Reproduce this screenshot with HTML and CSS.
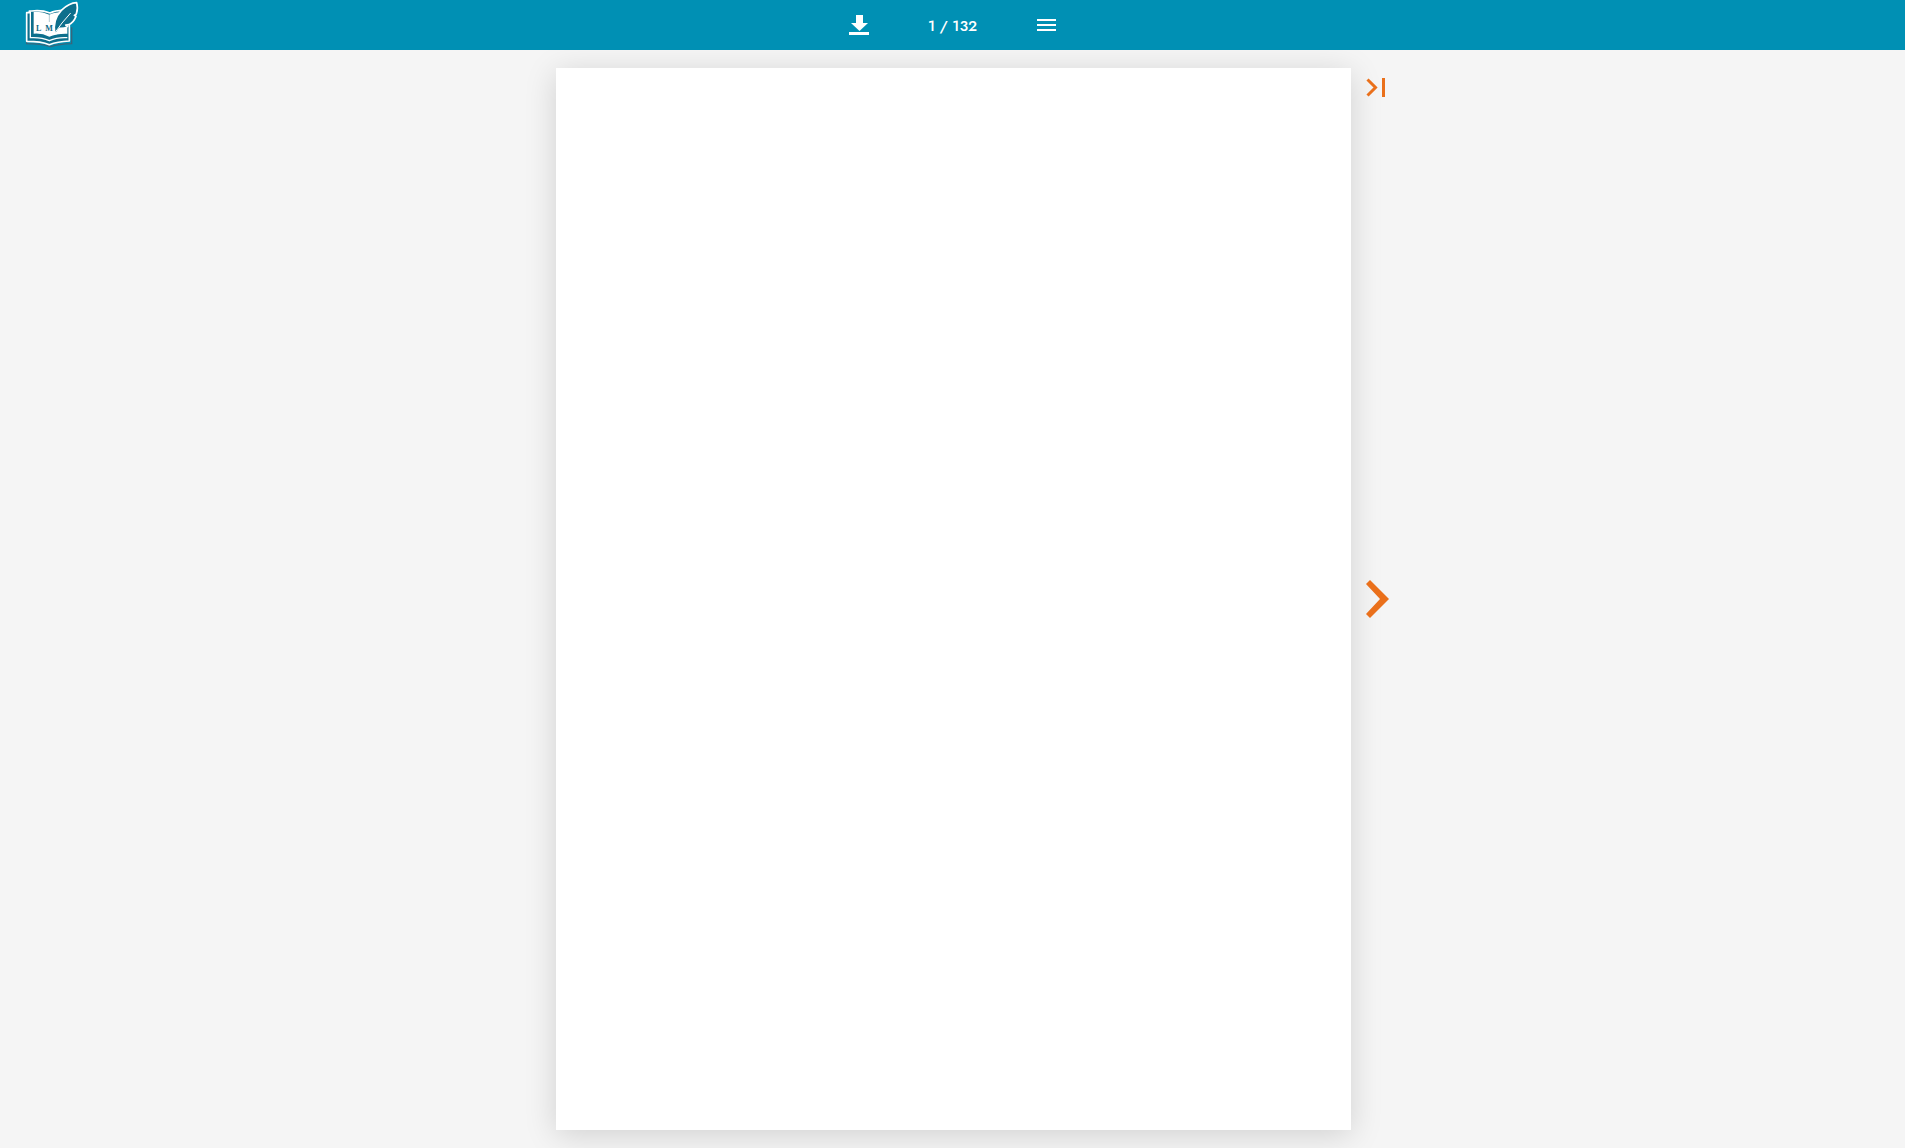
FILE: index.html
```html
<!DOCTYPE html>
<html lang="en">
<head>
<meta charset="utf-8">
<meta name="viewport" content="width=device-width, initial-scale=1">
<title>Document viewer</title>
<link rel="stylesheet" href="styles.css">
</head>
<body>
<header class="toolbar">
  <a class="brand" href="#" aria-label="Home">
    <svg class="brand-logo" viewBox="0 0 192 156" aria-hidden="true">
      <path d="M20 40 V131 Q65 131 92 140 Q116 132 155 131 V82" fill="none" stroke="#39657a" stroke-width="4"/>
      <path d="M20 38 H28 V33 H35 Q64 29 90 39 Q110 29 148 32 V123 Q112 125 88 134 Q64 124 20 124 Z" fill="#0d6f8c" stroke="#ffffff" stroke-width="5" stroke-linejoin="round"/>
      <path d="M31 34 V113 Q64 111 88 122 Q112 111 142 113" fill="none" stroke="#ffffff" stroke-width="4"/>
      <path d="M41 36 Q64 33 88 44 Q106 34 142 36 V101 Q110 100 88 110 Q67 99 41 101 Z" fill="#ffffff"/>
      <path d="M88 45 V66" fill="none" stroke="#8eafba" stroke-width="2"/>
      <text class="brand-text" x="48" y="93">L</text>
      <text class="brand-text" x="76" y="93">M</text>
      <path d="M104 99 Q98 58 124 31 Q147 9 170 8 Q175 25 169 42 L163 46 L168 49 Q160 69 146 74 L137 75 L143 79 Q133 86 119 85 L108 101 Z" fill="#0d6f8c" stroke="#ffffff" stroke-width="5" stroke-linejoin="round"/>
      <path d="M105 98 Q124 69 151 40" fill="none" stroke="#ffffff" stroke-width="3" stroke-linecap="round"/>
    </svg>
  </a>
  <nav class="tools" aria-label="Document tools">
    <button class="tool" type="button" aria-label="Download">
      <svg width="20" height="20" viewBox="0 0 20 20" aria-hidden="true"><path d="M7 0h7v8h5l-8.500 8L2 8h5zM0 17h20v3H0z" fill="currentColor"/></svg>
    </button>
    <button class="tool page-count" type="button">1 / 132</button>
    <button class="tool" type="button" aria-label="Menu">
      <svg width="19" height="12" viewBox="0 0 19 12" aria-hidden="true"><path d="M0 0h19v2H0zM0 5h19v2H0zM0 10h19v2H0z" fill="currentColor"/></svg>
    </button>
  </nav>
</header>
<main class="viewer">
  <article class="sheet" aria-label="Page 1"></article>
  <nav class="pager" aria-label="Pages">
    <button class="step" type="button" aria-label="Last page">
      <svg width="19" height="20" viewBox="0 0 19 20" aria-hidden="true"><path d="M1.500 1.500L9.500 9.500L1.500 17.500" fill="none" stroke="currentColor" stroke-width="3"/><path d="M16 0h3v19h-3z" fill="currentColor"/></svg>
    </button>
    <button class="step step-next" type="button" aria-label="Next page">
      <svg width="23" height="38" viewBox="0 0 23 38" aria-hidden="true"><path d="M4 0L23 19L4 38L0 34L14 19L0 4Z" fill="currentColor"/></svg>
    </button>
  </nav>
</main>
</body>
</html>
```
FILE: styles.css
```css
* {
  box-sizing: border-box;
}

body {
  display: flex;
  flex-direction: column;
  min-height: 100vh;
  margin: 0;
  background: #f5f5f5;
  font-family: Jost, Lato, sans-serif;
}

button {
  padding: 0;
  border: 0;
  background: none;
  color: inherit;
  font: inherit;
  cursor: pointer;
}

svg {
  display: block;
}

.toolbar {
  position: relative;
  z-index: 1;
  display: grid;
  grid-template-columns: 1fr auto 1fr;
  height: 50px;
  background: #0090b4;
  color: #ffffff;
}

.brand {
  width: 64px;
  margin-left: 20px;
}

.brand-logo {
  width: 64px;
  height: 52px;
}

.brand-text {
  fill: #0d6682;
  font: bold 24px "Liberation Serif", serif;
}

.tools {
  display: flex;
}

.tool {
  display: flex;
  align-items: center;
  justify-content: center;
  width: 94px;
  height: 50px;
}

.page-count {
  padding-top: 2px;
  font-size: 15px;
  font-weight: 500;
}

.viewer {
  display: grid;
  flex: 1;
  grid-template-columns: 1fr auto 1fr;
  padding: 18px 0 18px 2px;
}

.sheet {
  grid-column: 2;
  height: calc(100vh - 86px);
  aspect-ratio: 795 / 1062;
  background: #ffffff;
  box-shadow: 0 5px 30px rgba(0, 0, 0, 0.15);
}

.pager {
  display: grid;
  grid-template-rows: 1fr auto 1fr;
  justify-items: start;
  padding-left: 15px;
  color: #ea701b;
}

.step {
  align-self: start;
  padding: 10px 0;
}

.step-next {
  padding: 0;
}
```
